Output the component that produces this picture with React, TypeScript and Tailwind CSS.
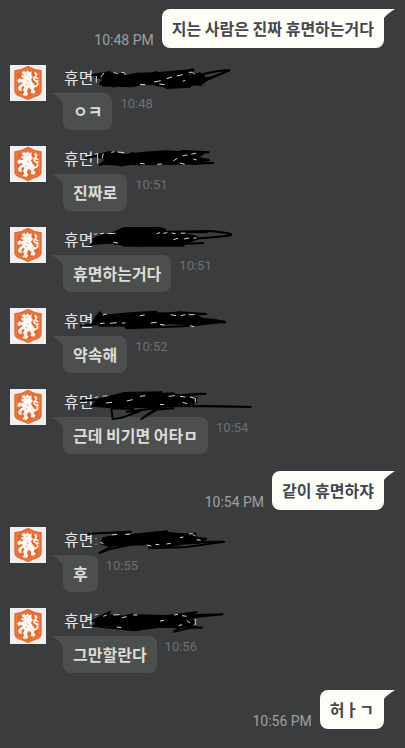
import React from "react";

type Scribble = { box: string; blob: string; strokes: string; specks: string };
type Received = { kind: "received"; text: string; time: string; scribble: Scribble };
type Sent = { kind: "sent"; text: string; time: string };
type Message = Received | Sent;

const messages: Message[] = [
  { kind: "sent", text: "지는 사람은 진짜 휴면하는거다", time: "10:48 PM" },
  {
    kind: "received",
    text: "ㅇㅋ",
    time: "10:48",
    scribble: {
      box: "240 15 540 108",
      blob: "M286 44L310 38L350 36L372 46L410 38L470 37L520 32L580 27L584 38L560 44L610 44L622 56L600 76L540 80L500 84L460 76L420 74L392 82L345 80L310 80L296 68L318 60L286 54Z",
      strokes: "M276 46L330 36L300 72L372 38L340 80L470 36L400 78L580 28L470 76L600 40L520 82L640 50L688 31Q660 30 590 47M600 76L620 60L688 31M500 84L570 80",
      specks: "M289 48v20M312 38l-10 14M340 38l14 2M364 37q12 -2 12 7M420 73l16 1M462 66l20 -4M500 56l16 -5M530 48l18 -4M566 37q14 -3 18 5M478 72l16 2M548 64l8 -3",
    },
  },
  {
    kind: "received",
    text: "진짜로",
    time: "10:51",
    scribble: {
      box: "240 21 540 108",
      blob: "M290 45L330 36L372 46L430 38L500 34L590 40L622 38L600 54L612 70L590 78L530 72L470 78L420 74L370 80L320 78L296 76L316 62L290 56Z",
      strokes: "M256 58L345 38L300 78L400 42L360 80L550 36L626 40L490 44L590 56L628 63L500 62L640 72L560 74L400 76",
      specks: "M285 46l8 -3v30M310 44l-4 14M334 40l10 -2M354 39l18 2M420 73l14 2M472 76l14 -1M520 66l12 -8M548 50l14 -2M574 46l14 -4M540 72l14 4M580 60l10 3",
    },
  },
  {
    kind: "received",
    text: "휴면하는거다",
    time: "10:51",
    scribble: {
      box: "240 24 540 108",
      blob: "M284 54L310 45L350 42L360 28L440 27L490 30L500 38L550 42L590 50L600 60L570 70L550 80L470 78L430 82L370 80L330 74L272 78Z",
      strokes: "M272 78L330 46L370 28L430 25Q500 26 496 35L380 44M280 60L430 40L630 36Q696 42 694 48Q670 54 560 60L390 70M460 48Q540 36 620 40M470 78L610 72M370 80L550 80",
      specks: "M282 46l10 -2M300 44l12 -1M322 44l24 -1M470 44l10 -3M490 43l12 -2M515 42l12 2M542 43l14 -1M520 62l14 -4M552 60l16 -3M340 70l14 2M580 58l10 -2",
    },
  },
  {
    kind: "received",
    text: "약속해",
    time: "10:52",
    scribble: {
      box: "240 27 540 108",
      blob: "M284 58L300 40L308 48L330 52L400 44L470 40L550 42L590 48L610 58L650 66L590 80L510 76L440 84L376 88L370 78L300 80L272 76Z",
      strokes: "M240 80L330 72L500 70L676 70M284 58L300 40L310 50L400 42L468 38L350 60L540 40L618 45L480 52L640 62L674 68L550 82L380 88L480 78L300 80",
      specks: "M308 48l12 -3M300 74l14 -2M330 73l20 -2M366 72l10 0M420 50l14 -2M512 47l16 3M542 50l14 -3M566 47l18 0M452 72l18 -2M480 76l14 2M570 80l12 3",
    },
  },
  {
    kind: "received",
    text: "근데 비기면 어타ㅁ",
    time: "10:54",
    scribble: {
      box: "240 30 540 108",
      blob: "M276 76L296 58L330 50L372 42L480 42L520 40L540 50L594 54L584 76L540 84L450 88L390 86L350 86L290 80Z",
      strokes: "M232 66L300 62L372 42L484 40L330 64L600 44L616 44L450 58L590 68L380 80L610 82L752 84L600 80M276 80L400 90L334 88L338 120L366 116L420 96L380 98L480 86L424 120L464 92L520 88",
      specks: "M284 56l10 -3M308 52l14 -2M318 72l18 -2M380 66l18 -4M420 52l16 -2M506 52l18 -2M540 52l16 2M570 54l16 4v12M480 76l12 1M548 70l14 4",
    },
  },
  { kind: "sent", text: "같이 휴면하쟈", time: "10:54 PM" },
  {
    kind: "received",
    text: "후",
    time: "10:55",
    scribble: {
      box: "240 24 540 108",
      blob: "M306 58L350 48L430 42L500 38L560 44L584 52L622 58L600 74L530 78L450 88L440 78L370 80L330 84L300 76Z",
      strokes: "M266 44L392 38L310 58L500 37L400 52L588 44L470 60L618 60L480 70L672 68L560 84L448 88L540 76L400 76L330 90L298 102L350 72",
      specks: "M288 58v3M288 74v3M300 70l10 4M335 48l16 -2M376 46l14 0M440 78l14 3M466 76l12 1M500 75l12 -2M566 45q12 -5 18 5M540 56l10 -2M590 62l12 2",
    },
  },
  {
    kind: "received",
    text: "그만할란다",
    time: "10:56",
    scribble: {
      box: "240 27 540 108",
      blob: "M284 60L314 44L370 50L420 46L490 48L540 46L590 40L574 52L588 70L570 84L540 88L470 86L400 94L372 90L320 82L284 82Z",
      strokes: "M278 66L330 39L296 72L400 46L340 84L540 46L590 40L500 62L668 46L590 48L470 70L606 86L570 86L522 98L560 72L400 94L310 84L280 80",
      specks: "M284 48l10 -2M310 52l10 -4M340 48l18 -1M366 56l14 -3M400 48l12 0M522 48l12 -2M546 50l14 2M480 66l12 -2M560 64l10 8M586 60v18M350 84l14 2M536 80l10 -3",
    },
  },
  { kind: "sent", text: "허ㅏㄱ", time: "10:56 PM" },
];

function Avatar() {
  return (
    <svg className="size-9 shrink-0" viewBox="0 0 108 108" role="img" aria-label="프로필">
      <rect width="108" height="108" fill="#f1eff0" />
      <path d="M13 16Q36 13 54 2Q72 13 95 16V78Q94 88 84 93Q66 98 54 106Q42 98 24 93Q14 88 13 78Z" fill="#e8692f" />
      <path
        d="M19 22Q40 19 54 9Q68 19 89 22V76Q88 84 80 88Q64 92 54 99Q44 92 28 88Q20 84 19 76Z"
        fill="none"
        stroke="#f6b08d"
        strokeWidth="2"
        strokeDasharray="3 3"
      />
      <path
        d="M34 24L42 17L47 22L53 16L58 22L65 19L64 30L69 36L63 43L66 50L71 56L76 64L71 73L77 80L72 86L62 84L64 75L58 69L53 71L51 80L55 86L50 93L37 90L43 82L39 75L44 65L39 63L34 68L36 77L27 77L24 68L30 60L39 54L33 51L25 55L22 46L28 40L36 43L42 39L35 37L33 31L43 31Z"
        fill="#fdf8f5"
      />
      <path
        d="M67 64Q84 66 83 55Q81 47 74 45Q68 40 77 34Q81 29 74 23M74 23L82 29M74 37L85 41M77 50L86 48"
        fill="none"
        stroke="#fdf8f5"
        strokeWidth="5"
      />
      <path d="M49 28h4M50 47l6 3M46 57l5 3" stroke="#e8692f" strokeWidth="2" />
    </svg>
  );
}

function ScribbleMark({ box, blob, strokes, specks }: Scribble) {
  return (
    <svg className="pointer-events-none absolute left-20 top-0 z-10 h-9 w-45" viewBox={box} aria-hidden="true">
      <path d={blob} fill="#000" />
      <path d={strokes} fill="none" stroke="#000" strokeWidth="6" strokeLinecap="round" strokeLinejoin="round" />
      <path d={specks} fill="none" stroke="#d5d5d5" strokeWidth="3" />
    </svg>
  );
}

function ReceivedMessage({ message }: { message: Received }) {
  return (
    <li className="relative flex items-start pl-2.5">
      <Avatar />
      <div className="ml-1.5 min-w-0">
        <div className="pl-3 text-[16px] leading-7 text-[#e6e6e6]">휴면</div>
        <div className="flex items-start">
          <svg className="h-2.5 w-[11px] shrink-0" viewBox="0 0 11 10" aria-hidden="true">
            <path d="M0 0H11V10Q9 6 0 0Z" fill="#4d4f4e" />
          </svg>
          <p className="rounded-lg rounded-tl-none bg-[#4d4f4e] px-2.5 py-1.5 font-['Noto_Sans_CJK_KR',sans-serif] text-[16px] leading-[25px] font-bold text-[#dcdcd8]">
            {message.text}
          </p>
          <time className="ml-2 shrink-0 text-[13px] leading-[22px] text-[#707070]">{message.time}</time>
        </div>
      </div>
      <ScribbleMark {...message.scribble} />
    </li>
  );
}

function SentMessage({ message }: { message: Sent }) {
  return (
    <li className="my-px flex items-end justify-end pr-2.5">
      <time className="mr-2 shrink-0 text-[14px] leading-4 text-[#a0a0a0]">{message.time}</time>
      <div className="flex items-start">
        <p className="rounded-lg rounded-tr-none bg-[#fdfef8] px-2.5 py-[7px] font-['Noto_Sans_CJK_KR',sans-serif] text-[16px] leading-[25px] font-bold text-[#44474d]">
          {message.text}
        </p>
        <svg className="h-2.5 w-[11px] shrink-0" viewBox="0 0 11 10" aria-hidden="true">
          <path d="M0 0H11Q3 5 0 9Z" fill="#fdfef8" />
        </svg>
      </div>
    </li>
  );
}

export default function App() {
  return (
    <main className="min-h-screen bg-[#3b3c3e] pt-2 pb-4 font-['Roboto','Noto_Sans_CJK_KR',sans-serif]">
      <ol className="flex flex-col gap-4">
        {messages.map((message, index) =>
          message.kind === "sent" ? (
            <SentMessage key={index} message={message} />
          ) : (
            <ReceivedMessage key={index} message={message} />
          ),
        )}
      </ol>
    </main>
  );
}
